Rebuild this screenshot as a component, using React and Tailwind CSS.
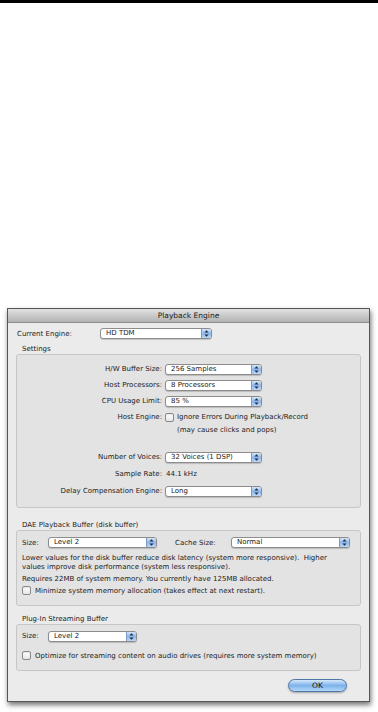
import React from 'react';

// Aqua-style popup menu: white field plus blue stepper arrows on the right
const Popup = ({ value, className = '' }) => (
  <div className={`flex h-[11px] items-stretch rounded-[3px] border border-[#8c8c8c] bg-white shadow-[0_1px_1px_rgba(0,0,0,0.18)] ${className}`}>
    <span className="flex-1 overflow-hidden whitespace-nowrap pl-[5px] leading-[9px]">{value}</span>
    <span className="flex w-[10px] items-center justify-center rounded-r-[2px] border-l border-[#7d9cc4] bg-gradient-to-b from-[#d3e4f7] via-[#8fb8ea] to-[#b9d6f6]">
      <svg width="5" height="7" viewBox="0 0 5 7">
        <path d="M2.5 0.3 L4.6 2.6 L0.4 2.6 Z" fill="#1d2b47" />
        <path d="M0.4 4.4 L4.6 4.4 L2.5 6.7 Z" fill="#1d2b47" />
      </svg>
    </span>
  </div>
);

const Checkbox = () => (
  <span className="inline-block h-[9px] w-[9px] shrink-0 rounded-[2px] border border-[#8a8a8a] bg-gradient-to-b from-white to-[#e6e6e6] shadow-[inset_0_1px_1px_rgba(0,0,0,0.1)]" />
);

const GroupBox = ({ children, className = '' }) => (
  <div className={`rounded-[3px] border border-[#c6c6c6] bg-[#e3e3e3] ${className}`}>{children}</div>
);

const settingsRows = [
  { label: 'H/W Buffer Size:', value: '256 Samples' },
  { label: 'Host Processors:', value: '8 Processors' },
  { label: 'CPU Usage Limit:', value: '85 %' },
];

const SettingRow = ({ label, children, className = 'h-[16px]' }) => (
  <div className={`flex items-center ${className}`}>
    <span className="w-[145px] shrink-0 pr-[0px] text-right whitespace-nowrap">{label}</span>
    <div className="ml-[3px] flex items-center">{children}</div>
  </div>
);

export default function App() {
  return (
    <div className="h-[712px] w-[378px] overflow-hidden bg-white font-['DejaVu_Sans',sans-serif] text-[7px] leading-[10px] text-[#222]">
      <div className="h-[3px] bg-black" />

      {/* Playback Engine dialog */}
      <div className="ml-[7px] mt-[305px] flex h-[394px] w-[363px] flex-col border border-[#565656] bg-[#ebebeb] shadow-[1px_3px_5px_rgba(0,0,0,0.55)]">
        <div className="flex h-[14px] shrink-0 items-center justify-center border-b border-[#8d8d8d] bg-gradient-to-b from-[#e2e2e2] to-[#b3b3b3] text-[7.5px] text-[#1a1a1a]">
          Playback Engine
        </div>

        <div className="flex flex-1 flex-col px-[8px]">
          <div className="mt-[5px] flex h-[11px] items-center pl-[1px]">
            <span className="w-[83px] whitespace-nowrap">Current Engine:</span>
            <Popup value="HD TDM" className="w-[112px]" />
          </div>

          <div className="mt-[5px] h-[10px] pl-[6px]">Settings</div>
          <GroupBox className="pb-[8px] pt-[6px]">
            {settingsRows.map((row) => (
              <SettingRow key={row.label} label={row.label}>
                <Popup value={row.value} className="w-[97px]" />
              </SettingRow>
            ))}
            <SettingRow label="Host Engine:">
              <Checkbox />
              <span className="ml-[3px] whitespace-nowrap">Ignore Errors During Playback/Record</span>
            </SettingRow>
            <div className="flex h-[10px] items-center pl-[160px] whitespace-nowrap">(may cause clicks and pops)</div>
            <div className="mt-[14px]">
              <SettingRow label="Number of Voices:">
                <Popup value="32 Voices (1 DSP)" className="w-[97px]" />
              </SettingRow>
              <SettingRow label="Sample Rate:" className="h-[18px]">
                <span className="pl-[1px]">44.1 kHz</span>
              </SettingRow>
              <SettingRow label="Delay Compensation Engine:">
                <Popup value="Long" className="w-[97px]" />
              </SettingRow>
            </div>
          </GroupBox>

          <div className="mt-[12px] h-[10px] pl-[6px]">DAE Playback Buffer (disk buffer)</div>
          <GroupBox className="px-[5px] pb-[9px] pt-[6px]">
            <div className="flex h-[11px] items-center">
              <span className="w-[26px]">Size:</span>
              <Popup value="Level 2" className="w-[109px]" />
              <span className="ml-[18px] w-[56px] whitespace-nowrap">Cache Size:</span>
              <Popup value="Normal" className="w-[119px]" />
            </div>
            <p className="mt-[6px] whitespace-nowrap leading-[8.5px]">
              Lower values for the disk buffer reduce disk latency (system more responsive).&nbsp; Higher
              <br />
              values improve disk performance (system less responsive).
            </p>
            <p className="mt-[4px] whitespace-nowrap leading-[8.5px]">
              Requires 22MB of system memory. You currently have 125MB allocated.
            </p>
            <label className="mt-[2px] flex h-[10px] items-center gap-[4px] whitespace-nowrap">
              <Checkbox />
              Minimize system memory allocation (takes effect at next restart).
            </label>
          </GroupBox>

          <div className="mt-[8px] h-[10px] pl-[6px]">Plug-In Streaming Buffer</div>
          <GroupBox className="px-[5px] pb-[9px] pt-[6px]">
            <div className="flex h-[11px] items-center">
              <span className="w-[26px]">Size:</span>
              <Popup value="Level 2" className="w-[89px]" />
            </div>
            <label className="mt-[9px] flex h-[10px] items-center gap-[4px] whitespace-nowrap">
              <Checkbox />
              Optimize for streaming content on audio drives (requires more system memory)
            </label>
          </GroupBox>

          <div className="mt-[8px] flex justify-end pr-[14px]">
            <button className="h-[13px] w-[59px] rounded-full border border-[#4f76a8] bg-gradient-to-b from-[#d6e8fa] via-[#7db2ea] to-[#b4d8f8] text-[7.5px] leading-[11px] text-[#111] shadow-[0_1px_2px_rgba(0,0,0,0.3)]">
              OK
            </button>
          </div>
        </div>
      </div>
    </div>
  );
}
